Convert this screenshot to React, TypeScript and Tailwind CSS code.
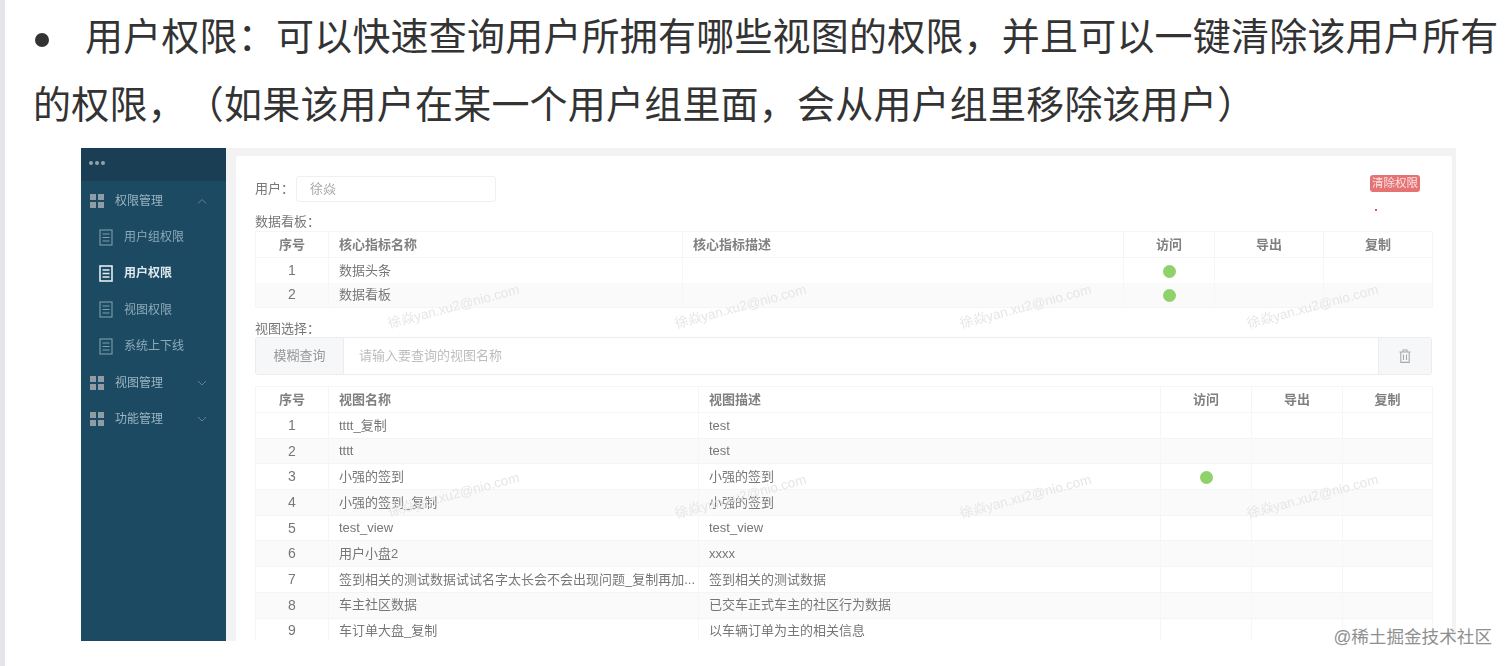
import React from "react";

const FONT = "font-['Liberation_Sans','Noto_Sans_CJK_SC',sans-serif]";

const viewRows = [
  ["1", "tttt_复制", "test", false],
  ["2", "tttt", "test", false],
  ["3", "小强的签到", "小强的签到", true],
  ["4", "小强的签到_复制", "小强的签到", false],
  ["5", "test_view", "test_view", false],
  ["6", "用户小盘2", "xxxx", false],
  ["7", "签到相关的测试数据试试名字太长会不会出现问题_复制再加...", "签到相关的测试数据", false],
  ["8", "车主社区数据", "已交车正式车主的社区行为数据", false],
  ["9", "车订单大盘_复制", "以车辆订单为主的相关信息", false],
] as const;

const watermarks = [
  "left-[305px] top-[149px]",
  "left-[592px] top-[149px]",
  "left-[877px] top-[149px]",
  "left-[1164px] top-[149px]",
  "left-[305px] top-[337px]",
  "left-[592px] top-[339px]",
  "left-[877px] top-[339px]",
  "left-[1164px] top-[339px]",
];

const GridIcon = () => (
  <svg width="14" height="14" viewBox="0 0 14 14" className="shrink-0">
    <rect x="0" y="0" width="6" height="6" fill="#8d9ca5" />
    <rect x="8" y="0" width="6" height="6" fill="#8d9ca5" />
    <rect x="0" y="8" width="6" height="6" fill="#8d9ca5" />
    <rect x="8" y="8" width="6" height="6" fill="#8d9ca5" />
  </svg>
);

const DocIcon = ({ active }: { active?: boolean }) => (
  <svg width="14" height="17" viewBox="0 0 14 17" fill="none" stroke={active ? "#e4edf1" : "#7f9dac"} strokeWidth={active ? 1.6 : 1.1} className="shrink-0">
    <rect x="1" y="1" width="12" height="15" />
    <path d="M3.5 5h7M3.5 8.5h7M3.5 12h7" />
  </svg>
);

const Chevron = ({ up }: { up?: boolean }) => (
  <svg width="10" height="6" viewBox="0 0 10 6" fill="none" stroke="#5f8497" strokeWidth="1" className="ml-auto mr-[19px] shrink-0">
    <path d={up ? "M1 5.5 5 1.5l4 4" : "M1 1l4 4 4-4"} />
  </svg>
);

const Dot = () => <span className="inline-block h-[13px] w-[13px] rounded-full bg-[#8fd16a] align-middle" />;

const MenuGroup = ({ label, up }: { label: string; up?: boolean }) => (
  <div className="flex h-[36.4px] items-center pl-[9px] text-[12px] text-[#9db5c1]">
    <GridIcon />
    <span className="ml-[11px]">{label}</span>
    <Chevron up={up} />
  </div>
);

const MenuItem = ({ label, active }: { label: string; active?: boolean }) => (
  <div className={`flex h-[36.4px] items-center pl-[18px] text-[12px] ${active ? "font-bold text-[#dfe9ee]" : "text-[#8eaab8]"}`}>
    <DocIcon active={active} />
    <span className="ml-[11px]">{label}</span>
  </div>
);

const Th = ({ children, center }: { children?: React.ReactNode; center?: boolean }) => (
  <th className={`border border-[#f5f5f5] font-bold text-[#808080] ${center ? "text-center" : "pl-[10px] text-left"}`}>{children}</th>
);

const Td = ({ children, center }: { children?: React.ReactNode; center?: boolean }) => (
  <td className={`border-x border-[#f6f6f6] p-0 ${center ? "text-center" : "pl-[10px] text-left"}`}>{children}</td>
);

export default function App() {
  return (
    <div className={`flex h-[666px] w-[1512px] overflow-hidden bg-white ${FONT}`}>
      <div className="w-[5px] shrink-0 bg-[#e4e4ea]" />
      <main className="relative flex-1 pl-[28px]">
        {/* Paragraph */}
        <p className="w-[1476px] pt-[3px] text-[38px] leading-[68px] tracking-[0.2px] text-[#333] [text-spacing-trim:space-all]">
          <span className="inline-block w-[52px] align-middle">
            <span className="ml-[2px] block h-[14px] w-[14px] rounded-full bg-[#333]" />
          </span>
          用户权限：可以快速查询用户所拥有哪些视图的权限，并且可以一键清除该用户所有的权限，（如果该用户在某一个用户组里面，会从用户组里移除该用户）
        </p>

        {/* Screenshot */}
        <div className="relative ml-[48px] mt-[9px] flex h-[493px] w-[1375px] overflow-hidden text-[13px] text-[#777] blur-[0.5px]">
          <aside className="w-[145px] shrink-0 bg-[#1c4a63]">
            <div className="mb-[1.5px] flex h-[33px] items-center gap-[2px] bg-[#1a3f55] pb-[3px] pl-[8px]">
              <span className="h-[4px] w-[4px] rounded-full bg-[#8fa3ae]" />
              <span className="h-[4px] w-[4px] rounded-full bg-[#8fa3ae]" />
              <span className="h-[4px] w-[4px] rounded-full bg-[#8fa3ae]" />
            </div>
            <MenuGroup label="权限管理" up />
            <MenuItem label="用户组权限" />
            <MenuItem label="用户权限" active />
            <MenuItem label="视图权限" />
            <MenuItem label="系统上下线" />
            <MenuGroup label="视图管理" />
            <MenuGroup label="功能管理" />
          </aside>

          <section className="flex-1 bg-[#f3f3f3] pl-[10px] pr-[5px] pt-[8px]">
            <div className="relative h-full rounded-t-[3px] bg-white px-[19px] pt-[20px]">
              {/* User row */}
              <div className="flex items-start">
                <span className="leading-[26px]">用户：</span>
                <div className="ml-[2px] flex h-[26px] w-[200px] items-center rounded-[3px] border border-[#f0f0f0] pl-[13px] text-[#a8a8a8]">徐焱</div>
                <button className="ml-auto mr-[13px] h-[17px] w-[50px] -translate-y-[1px] rounded-[3px] bg-[#e57373] text-[11.5px] leading-[17px] text-[#fbe4e4]">清除权限</button>
              </div>
              <span className="absolute left-[1139px] top-[53px] h-[2px] w-[2px] rounded-full bg-[#c2185b]" />

              <div className="mt-[11px] h-[18px] leading-[18px]">数据看板：</div>
              <table className="w-[1177px] table-fixed border-collapse border border-[#f5f5f5]">
                <colgroup>
                  <col className="w-[73px]" />
                  <col className="w-[354px]" />
                  <col className="w-[441px]" />
                  <col className="w-[91px]" />
                  <col className="w-[109px]" />
                  <col className="w-[109px]" />
                </colgroup>
                <thead>
                  <tr className="h-[26px]">
                    <Th center>序号</Th>
                    <Th>核心指标名称</Th>
                    <Th>核心指标描述</Th>
                    <Th center>访问</Th>
                    <Th center>导出</Th>
                    <Th center>复制</Th>
                  </tr>
                </thead>
                <tbody>
                  <tr className="h-[25px]">
                    <Td center><span className="text-[14px]">1</span></Td>
                    <Td>数据头条</Td>
                    <Td />
                    <Td center><Dot /></Td>
                    <Td />
                    <Td />
                  </tr>
                  <tr className="h-[25px] bg-[#fafafa]">
                    <Td center><span className="text-[14px]">2</span></Td>
                    <Td>数据看板</Td>
                    <Td />
                    <Td center><Dot /></Td>
                    <Td />
                    <Td />
                  </tr>
                </tbody>
              </table>

              <div className="mt-[12px] h-[17px] leading-[18px]">视图选择：</div>
              <div className="flex h-[38px] w-[1177px] rounded-[3px] border border-[#ececec]">
                <div className="flex w-[88px] items-center justify-center border-r border-[#ececec] bg-[#f6f7f9] text-[#999]">模糊查询</div>
                <div className="flex flex-1 items-center pl-[15px] text-[#bdbdbd]">请输入要查询的视图名称</div>
                <div className="flex w-[53px] items-center justify-center border-l border-[#ececec] bg-[#f6f7f9]">
                  <svg width="12" height="14" viewBox="0 0 12 14" fill="none" stroke="#a9a9a9" strokeWidth="1.1">
                    <path d="M0.5 3h11M4 3V1h4v2M1.8 3v10.4h8.4V3M4.5 5.5v5.5M7.5 5.5v5.5" />
                  </svg>
                </div>
              </div>

              <table className="mt-[11px] w-[1177px] table-fixed border-collapse border border-[#f5f5f5]">
                <colgroup>
                  <col className="w-[73px]" />
                  <col className="w-[370px]" />
                  <col className="w-[462px]" />
                  <col className="w-[91px]" />
                  <col className="w-[91px]" />
                  <col className="w-[90px]" />
                </colgroup>
                <thead>
                  <tr className="h-[26px]">
                    <Th center>序号</Th>
                    <Th>视图名称</Th>
                    <Th>视图描述</Th>
                    <Th center>访问</Th>
                    <Th center>导出</Th>
                    <Th center>复制</Th>
                  </tr>
                </thead>
                <tbody>
                  {viewRows.map(([no, name, desc, access], i) => (
                    <tr key={no} className={`h-[25.7px] border-b border-[#f4f4f4] ${i % 2 === 1 ? "bg-[#fafafa]" : "bg-white"}`}>
                      <Td center><span className="text-[14px]">{no}</span></Td>
                      <Td>{name}</Td>
                      <Td>{desc}</Td>
                      <Td center>{access && <Dot />}</Td>
                      <Td />
                      <Td />
                    </tr>
                  ))}
                </tbody>
              </table>
            </div>
          </section>

          {watermarks.map((pos) => (
            <span key={pos} className={`pointer-events-none absolute ${pos} -rotate-[15deg] whitespace-nowrap text-[13.5px] leading-[20px] text-[#e6e6e6]`}>
              徐焱yan.xu2@nio.com
            </span>
          ))}
        </div>

        <span className="absolute right-[20px] top-[626px] text-[17.6px] leading-[22px] text-[#8f8f8f]">@稀土掘金技术社区</span>
      </main>
    </div>
  );
}
